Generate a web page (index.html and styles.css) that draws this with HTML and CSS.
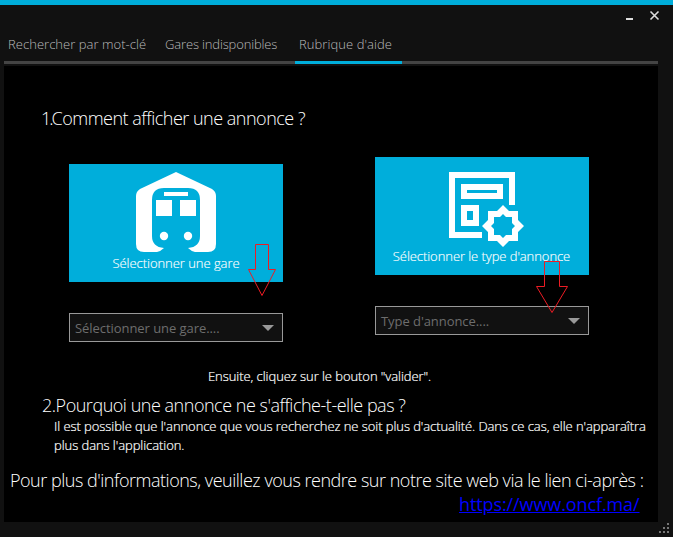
FILE: index.html
```
<!DOCTYPE html>
<html lang="fr">
<head>
<meta charset="utf-8">
<title>Rubrique d'aide</title>
<link rel="stylesheet" href="styles.css">
</head>
<body>
<div class="window">
  <header class="titlebar">
    <svg class="controls" width="36" height="12" viewBox="0 0 36 12"><path d="M0 8h7v2H0z" fill="#ddd"/><path d="M24.500 1.500l8 8M32.500 1.500l-8 8" stroke="#ddd" stroke-width="1.600"/></svg>
  </header>
  <nav class="tabs">
    <a class="tab t1"><span>Rechercher par mot-clé</span></a>
    <a class="tab t2"><span>Gares indisponibles</span></a>
    <a class="tab t3 active"><span>Rubrique d'aide</span></a>
  </nav>
  <main class="panel">
    <h2 class="title q1"><span class="num">1.</span>Comment afficher une annonce ?</h2>
    <div class="cards">
      <section class="card station">
        <div class="tile">
          <svg class="icon" width="80" height="80" viewBox="0 0 80 80">
            <path fill="#fff" fill-rule="evenodd" d="M40 0L76 17Q80 19.500 80 24V72Q80 80 72 80H59Q55 79 52 76Q64 75 64 64V28Q64 16 52 16H28Q16 16 16 28V64Q16 75 28 76Q25 79 21 80H8Q0 80 0 72V24Q0 19.500 4 17Z"/>
            <path fill="#fff" d="M28 20h24v4H28zM20 28h16v16H20zM44 28h16v16H44z"/>
            <circle cx="28" cy="64" r="4.200" fill="#fff"/><circle cx="52" cy="64" r="4.200" fill="#fff"/>
          </svg>
          <span class="label l1">Sélectionner une gare</span>
        </div>
        <div class="combo"><span class="c1">Sélectionner une gare....</span><i class="caret"></i></div>
        <svg class="arrow" width="30" height="54" viewBox="0 0 30 54"><path d="M8.500 .5H21.500V25.500H28.500L15 51.500L1.500 25.500H8.500Z"/></svg>
      </section>
      <section class="card notice">
        <div class="tile">
          <svg class="icon" width="75" height="75" viewBox="0 0 75 75">
            <path fill="#fff" fill-rule="evenodd" d="M0 0H66V33H60V6H6V60H33V66H0ZM12 12H54V27H12ZM18 18V21H48V18ZM12 33H30V54H12ZM18 39V48H24V39Z"/>
            <path fill="#fff" fill-rule="evenodd" d="M54 33L60 39H69V48L75 54L69 60V69H60L54 75L48 69H39V60L33 54L39 48V39H48ZM54 42L51 45H45V51L42 54L45 57V63H51L54 66L57 63H63V57L66 54L63 51V45H57Z"/>
          </svg>
          <span class="label l2">Sélectionner le type d'annonce</span>
        </div>
        <div class="combo"><span class="c2">Type d'annonce....</span><i class="caret"></i></div>
        <svg class="arrow" width="34" height="54" viewBox="0 0 34 54"><path d="M8.500 .5H23.500V25.500H31.500L16 51.500L.5 25.500H8.500Z"/></svg>
      </section>
    </div>
    <p class="text next"><span>Ensuite, cliquez sur le bouton "valider".</span></p>
    <h2 class="title q2"><span>2.Pourquoi une annonce ne s'affiche-t-elle pas ?</span></h2>
    <p class="text answer"><span class="a1">Il est possible que l'annonce que vous recherchez ne soit plus d'actualité. Dans ce cas, elle n'apparaîtra</span><br><span class="a2">plus dans l'application.</span></p>
    <p class="title more"><span>Pour plus d'informations, veuillez vous rendre sur notre site web via le lien ci-après :</span></p>
    <p class="title link"><a>https://www.oncf.ma/</a></p>
  </main>
  <svg class="grip" width="10" height="10" viewBox="0 0 10 10"><path fill="#777" d="M8 0h2v2H8zM4 4h2v2H4zM8 4h2v2H8zM0 8h2v2H0zM4 8h2v2H4zM8 8h2v2H8z"/></svg>
</div>
</body>
</html>
```
FILE: styles.css
```
* { box-sizing: border-box; margin: 0; padding: 0; }
body { background: #111; font-family: "Open Sans", "Noto Sans", sans-serif; font-weight: 300; overflow: hidden; }
.window { position: relative; width: 673px; height: 537px; border-top: 5px solid #00aedb; background: #111; white-space: nowrap; }
.titlebar { height: 25px; display: flex; justify-content: flex-end; padding: 5px 6px 0 0; }
.controls { margin-right: 5px; }
.tabs { display: flex; height: 34px; margin: 0 15px 0 4px; border-bottom: 3px solid #444; font-size: 13px; line-height: 29px; color: #bbb; }
.tab { height: 34px; padding-left: 4px; }
.t1 { width: 157px; letter-spacing: .04px; }
.t2 { width: 134px; letter-spacing: -.15px; }
.t3 { width: 107px; letter-spacing: .07px; }
.active { border-bottom: 3px solid #00aedb; }
.panel { width: 654px; height: 456px; margin: 2px 0 0 4px; background: #000; color: #fff; }
.title { font-size: 18px; line-height: 24px; font-weight: 300; }
.text { font-size: 13px; line-height: 19px; letter-spacing: -.065px; -webkit-text-stroke: .2px #fff; }
.q1 { padding: 40px 0 0 37px; letter-spacing: -.5px; }
.num { letter-spacing: -2px; }
.cards { display: flex; gap: 92px; padding: 27px 0 0 65px; height: 237px; }
.card { position: relative; width: 214px; }
.station { margin-top: 7px; }
.tile { height: 118px; background: #00aedb; display: flex; flex-direction: column; align-items: center; }
.station .icon { margin-top: 8px; }
.notice .icon { margin: 15px 0 0 8px; }
.label { font-size: 13px; line-height: 18px; letter-spacing: -.04px; -webkit-text-stroke: .15px #fff; }
.station .label { margin-top: 2px; }
.notice .label { letter-spacing: -.07px; margin-right: 1px; }
.combo { display: flex; align-items: center; justify-content: space-between; height: 29px; margin-top: 31px; padding: 0 8px 0 5px; border: 1px solid #999; background: #111; color: #6d6d6d; font-size: 13px; font-weight: 400; letter-spacing: -.06px; }
.caret { border: solid transparent; border-width: 6px 6px 0; border-top-color: #999; }
.arrow { position: absolute; left: 178px; top: 80px; fill: none; stroke: #ed1c24; stroke-width: 1; }
.notice .arrow { left: 161px; top: 104px; }
.next { padding: 0 0 0 204px; }
.q2 { padding: 7px 0 0 38px; letter-spacing: -.48px; }
.answer { padding-left: 50px; }
.more { padding: 13px 0 0 6px; letter-spacing: -.48px; }
.link { padding-left: 455px; color: #00f; font-weight: 400; letter-spacing: -.1px; }
.link a { text-decoration: underline; }
.grip { position: absolute; right: 4px; bottom: 4px; }
```
